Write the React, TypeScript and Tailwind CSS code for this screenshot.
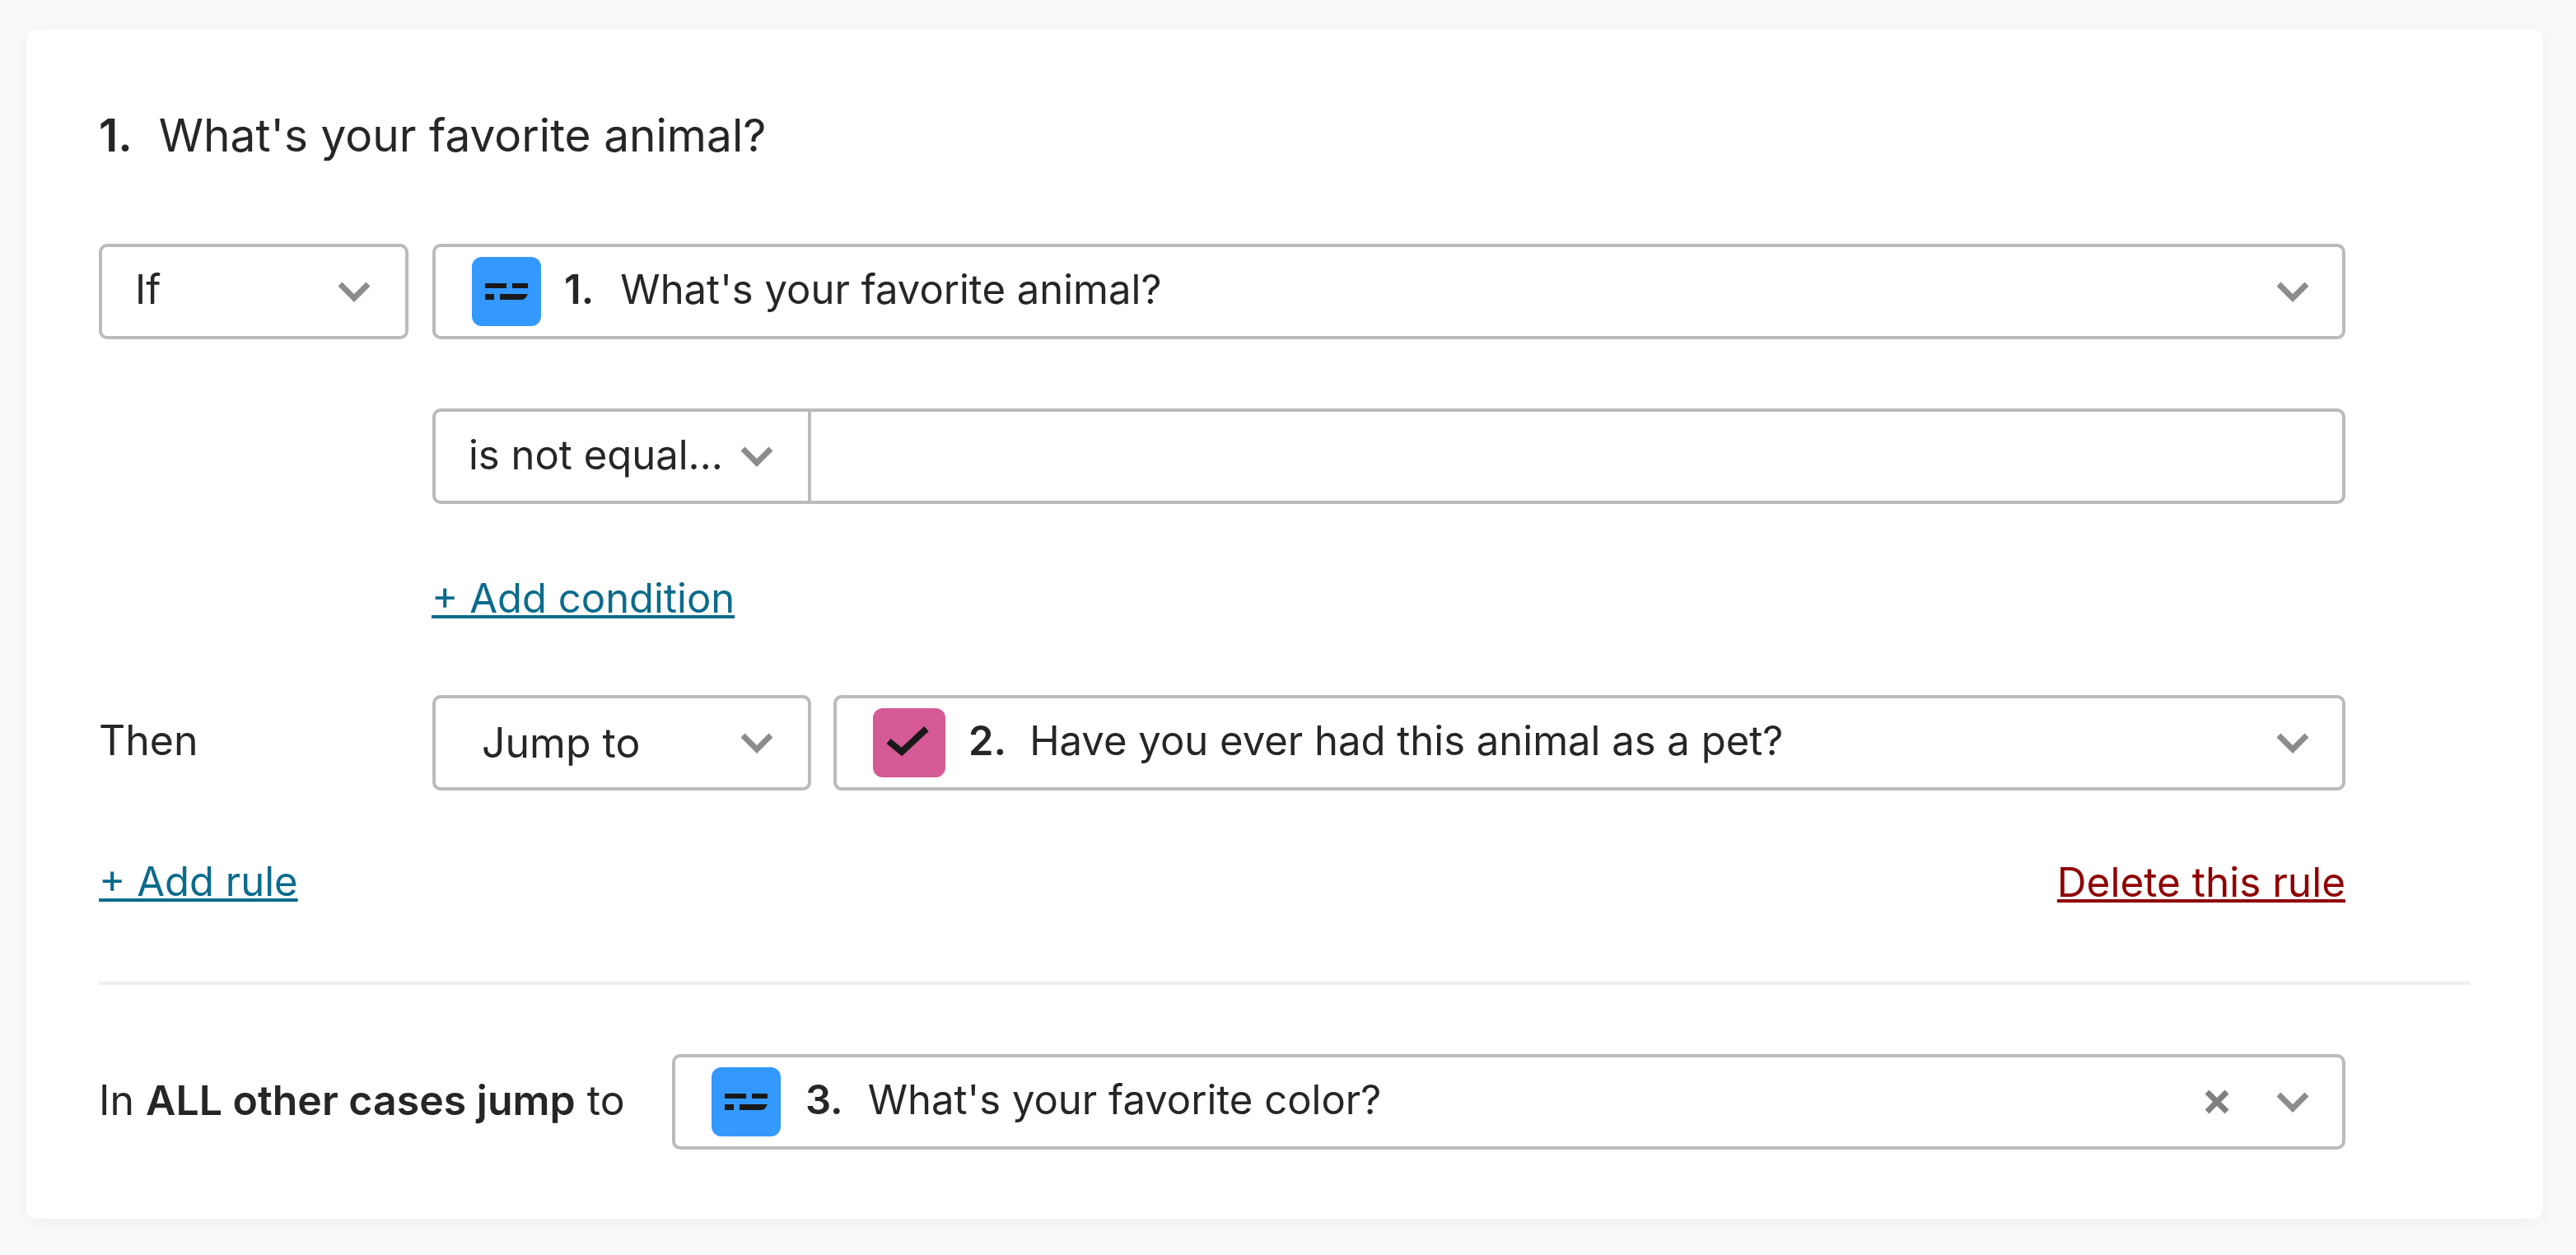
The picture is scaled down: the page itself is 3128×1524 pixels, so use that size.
import { ReactNode } from 'react';

function Chevron({ className = 'ml-auto' }: { className?: string }) {
  return (
    <svg width="40" height="26" viewBox="0 0 40 26" className={`shrink-0 ${className}`}>
      <path d="M3 4 L20 21 L37 4" fill="none" stroke="#8c8c8c" strokeWidth="7" />
    </svg>
  );
}

function ShortTextIcon() {
  return (
    <div className="w-[84px] h-[84px] shrink-0 rounded-[12px] bg-[#3399ff]">
      <svg width="84" height="84" viewBox="0 0 84 84">
        <path
          d="M16 32 H42 V38 H16 Z M49 32 H68 V38 H49 Z M16 45 H27 V52 H16 Z M34 45 H68 L65 50 Q63 52 60 52 H34 Z"
          fill="#191919"
        />
      </svg>
    </div>
  );
}

function CheckIcon() {
  return (
    <div className="w-[88px] h-[84px] shrink-0 rounded-[12px] bg-[#d55a96]">
      <svg width="88" height="84" viewBox="0 0 88 84">
        <path d="M19 40 L35 53 L65 25" fill="none" stroke="#191919" strokeWidth="8" />
      </svg>
    </div>
  );
}

function Select({ className, children }: { className: string; children: ReactNode }) {
  return (
    <div className={`h-[116px] flex items-center border-[4px] border-[#bbbbbb] rounded-[10px] bg-white ${className}`}>
      {children}
    </div>
  );
}

function Question({ num, text, numGap = 'ml-[28px]', textGap = 'ml-[28px]' }: { num: string; text: string; numGap?: string; textGap?: string }) {
  return (
    <span className={`-mt-[4px] text-[49px] whitespace-nowrap ${numGap}`}>
      <span className="font-semibold">{num}</span>
      <span className={textGap}>{text}</span>
    </span>
  );
}

export default function App() {
  return (
    <div className="min-h-[1524px] bg-[#fafafa] pt-[36px] px-[40px] font-['Inter',sans-serif] text-[#262627]">
      <div className="w-[3056px] -ml-[8px] h-[1444px] rounded-[12px] bg-white shadow-[0_4px_24px_rgba(0,0,0,0.06)] p-[88px] pt-[92px]">
        <h1 className="h-[72px] leading-[72px] text-[55px] font-normal">
          <span className="font-semibold">1.</span>
          <span className="ml-[32px]">What's your favorite animal?</span>
        </h1>

        <div className="w-[2728px]">
          <div className="mt-[96px] flex gap-[29px]">
            <Select className="w-[376px] pl-[40px] pr-[42px]">
              <span className="text-[49px] -mt-[4px]">If</span>
              <Chevron />
            </Select>
            <Select className="flex-1 pl-[44px] pr-[40px]">
              <ShortTextIcon />
              <Question num="1." text="What's your favorite animal?" textGap="ml-[32px]" />
              <Chevron />
            </Select>
          </div>

          <div className="mt-[84px] ml-[405px]">
            <Select className="w-full">
              <div className="w-[456px] h-full shrink-0 flex items-center pl-[40px] pr-[42px] border-r-[4px] border-[#bbbbbb]">
                <span className="text-[49px] -mt-[2px] whitespace-nowrap">is not equal...</span>
                <Chevron />
              </div>
            </Select>
          </div>

          <div className="mt-[85px] ml-[404px] h-[60px] leading-[60px]">
            <a className="text-[49px] text-[#0b6b8c] underline">+ Add condition</a>
          </div>

          <div className="mt-[87px] flex items-center">
            <span className="w-[405px] text-[50px] -mt-[6px]">Then</span>
            <Select className="w-[460px] pl-[56px] pr-[42px]">
              <span className="text-[50px] whitespace-nowrap">Jump to</span>
              <Chevron />
            </Select>
            <Select className="flex-1 ml-[27px] pl-[44px] pr-[40px]">
              <CheckIcon />
              <Question num="2." text="Have you ever had this animal as a pet?" />
              <Chevron />
            </Select>
          </div>

          <div className="mt-[81px] h-[60px] leading-[60px] flex justify-between text-[49px]">
            <a className="text-[#0b6b8c] underline">+ Add rule</a>
            <a className="text-[49.5px] text-[#8f0000] underline">Delete this rule</a>
          </div>
        </div>

        <div className="mt-[91px] h-[4px] bg-[#eeeeee]" />

        <div className="mt-[84px] w-[2728px] flex items-center">
          <span className="w-[696px] text-[50px] -mt-[4px] whitespace-nowrap">
            In <b className="font-semibold">ALL other cases jump</b> to
          </span>
          <Select className="flex-1 pl-[44px] pr-[40px]">
            <ShortTextIcon />
            <Question num="3." text="What's your favorite color?" numGap="ml-[30px]" textGap="ml-[30px]" />
            <svg width="32" height="32" viewBox="0 0 32 32" className="ml-auto shrink-0">
              <path d="M4 4 L28 28 M28 4 L4 28" fill="none" stroke="#808080" strokeWidth="7" />
            </svg>
            <Chevron className="ml-[56px]" />
          </Select>
        </div>
      </div>
    </div>
  );
}
